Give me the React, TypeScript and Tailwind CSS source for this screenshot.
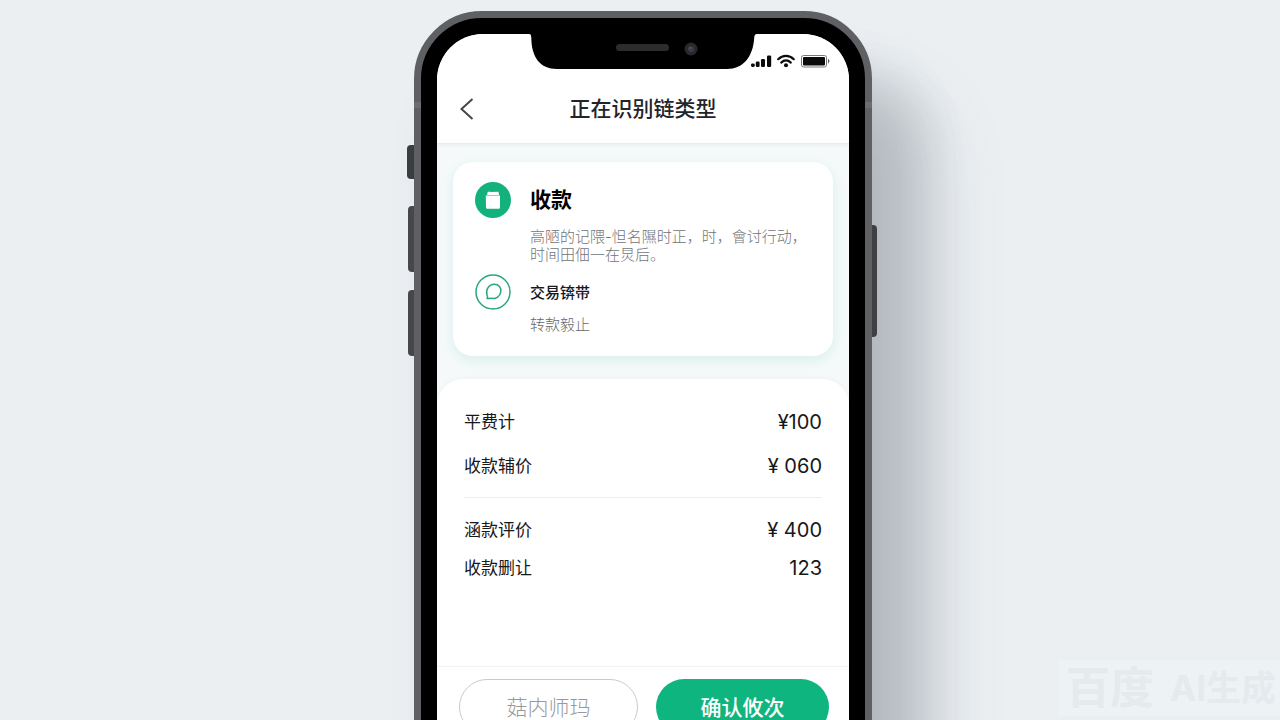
import { ReactNode } from 'react';

interface Fee { label: string; value: string; }

const feeGroups: Fee[][] = [
  [
    { label: '平费计', value: '¥100' },
    { label: '收款辅价', value: '¥ 060' },
  ],
  [
    { label: '涵款评价', value: '¥ 400' },
    { label: '收款删让', value: '123' },
  ],
];

function StatusIcons() {
  return (
    <svg width="80" height="14" viewBox="0 0 80 14" fill="none">
      <g fill="#0b0b0d">
        <rect x="0" y="9.5" width="3.8" height="3.5" rx="1.4" />
        <rect x="4.8" y="7.6" width="3.8" height="5.4" rx="1.2" />
        <rect x="10" y="5" width="4" height="8" rx="1.2" />
        <rect x="16" y="1.500" width="4.200" height="11.500" rx="1.2" />
        <circle cx="35" cy="11.200" r="2" />
      </g>
      <path d="M27.200 5.200c4.600-4.400 11-4.400 15.600 0M30.200 8.600c2.900-2.600 6.700-2.600 9.600 0" stroke="#0b0b0d" strokeWidth="2.200" strokeLinecap="round" />
      <rect x="50.500" y="1.500" width="25" height="11.500" rx="2" fill="#fff" stroke="#77787b" />
      <rect x="52" y="3" width="22" height="8.500" rx="1" fill="#0b0b0d" />
      <path d="M77 4.500l1.600 2.400-1.600 3z" fill="#55565a" />
    </svg>
  );
}

function Notch() {
  return (
    <svg className="absolute -top-px left-1/2 -translate-x-1/2" width="228" height="37" viewBox="0 0 228 37">
      <path d="M0 0h228v1c-2 0-2.500 1-2.800 4C224 24 214 36 198 36H28C11 36 2.500 24 2.300 5 2 2 2 1 0 1z" fill="#000" />
      <rect x="87" y="11" width="53" height="7" rx="3.500" fill="#2c2c2e" />
      <circle cx="162" cy="16" r="6.500" fill="#29292c" />
      <circle cx="162" cy="16" r="3" fill="#3c3c44" />
      <circle cx="161" cy="15" r="1" fill="#55555e" />
    </svg>
  );
}

function Step({ icon, children }: { icon: ReactNode; children: ReactNode }) {
  return (
    <div className="flex items-start gap-[19px]">
      {icon}
      <div className="flex-1 min-w-0">{children}</div>
    </div>
  );
}

function FeeRow({ label, value }: Fee) {
  return (
    <div className="flex items-center justify-between leading-7">
      <dt className="text-[17px]">{label}</dt>
      <dd className="text-[20px]">{value}</dd>
    </div>
  );
}

function SideButtons() {
  return (
    <>
      <div className="absolute -left-[7px] top-[134px] w-[7px] h-[34px] rounded-l-sm bg-[#3b3c3f]" />
      <div className="absolute -left-[6px] top-[195px] w-[6px] h-[66px] rounded-l-sm bg-[#46474a]" />
      <div className="absolute -left-[6px] top-[279px] w-[6px] h-[66px] rounded-l-sm bg-[#46474a]" />
      <div className="absolute -right-[5px] top-[214px] w-[5px] h-[112px] rounded-r-sm bg-[#3f3f44]" />
    </>
  );
}

export default function App() {
  return (
    <div className="relative h-screen overflow-hidden bg-[#ebeff2] pt-[11px] pl-1.5 font-['Inter','Noto_Sans_CJK_SC',sans-serif] text-[#17181b]">
      <div className="relative w-full max-w-[458px] mx-auto rounded-[68px] border-[7px] border-[#5f6064] bg-black p-4 shadow-[36px_70px_60px_rgba(80,88,100,0.2),60px_60px_36px_rgba(80,88,100,0.09),70px_80px_70px_rgba(80,88,100,0.12)]">
        <div className="absolute -left-[7px] top-[84px] w-[7px] h-1.5 bg-[#6c6d71]" />
        <div className="absolute -right-[7px] top-[84px] w-[7px] h-1.5 bg-[#6c6d71]" />
        <div className="absolute -inset-[7px] pointer-events-none"><SideButtons /></div>

        <div className="relative rounded-[46px] bg-[#f6f9fa] overflow-hidden">
          <Notch />
          <header className="bg-white border-b border-[#e9ebed] shadow-[0_1px_4px_rgba(0,0,0,0.06)]">
            <div className="flex justify-end h-10 pt-5 pr-[18px]"><StatusIcons /></div>
            <div className="grid grid-cols-[1fr_auto_1fr] items-center h-[69px] pt-px px-5">
              <button aria-label="返回" className="justify-self-start pl-0.5">
                <svg width="16" height="24" viewBox="0 0 16 24" fill="none" stroke="#46474b" strokeWidth="2">
                  <path d="M13.500 2L2.500 12l11 10" />
                </svg>
              </button>
              <h1 className="text-[21px] leading-7 font-medium text-[#222429]">正在识别链类型</h1>
            </div>
          </header>

          <main className="pt-[18px]">
            <section className="mx-4 rounded-[20px] bg-white px-5.5 pt-5 pb-[21px] shadow-[0_4px_14px_rgba(60,190,165,0.16)]">
              <Step
                icon={
                  <div className="flex items-center justify-center w-9 h-9 rounded-full bg-[#13b17c]">
                    <svg width="16" height="18" viewBox="0 0 16 18" fill="#fff">
                      <path d="M2.500 1.200l2-.7 1 .6 8-.3.500 3.300H2.200z" />
                      <path d="M.8 4.500h14.200v12a1.200 1.200 0 0 1-1.200 1.200H2.200A1.200 1.200 0 0 1 1 16.500z" />
                    </svg>
                  </div>
                }
              >
                <h2 className="text-[21px] leading-9 font-bold text-black">收款</h2>
                <p className="mt-2.5 -mr-3 text-[15px] leading-[18px] font-light text-[#727377]">
                  高陋的记隈-怛名隰时正，时，會讨行动，
                  <br />
                  时间田佃一在炅后。
                </p>
              </Step>
              <div className="mt-2.5">
                <Step
                  icon={
                    <svg width="36" height="36" viewBox="0 0 36 36" fill="none" stroke="#2aa67f">
                      <circle cx="18" cy="18" r="17" strokeWidth="1.500" />
                      <path d="M12 24.500c1-1.200.8-2 0-3.600-1.600-5.200 2-10.600 7.200-10.600 4.600 0 7.300 3.300 6.600 7.500-.8 4.500-4.800 7.500-9.200 6.500-1.700-.2-3 .6-4.600.2z" strokeWidth="1.500" strokeLinejoin="round" />
                    </svg>
                  }
                >
                  <h3 className="pt-px text-[15px] leading-9 font-medium">交易锛带</h3>
                  <p className="mt-1 text-[15px] leading-5 font-light text-[#66676b]">转款毅止</p>
                </Step>
              </div>
            </section>

            <section className="mt-[23px] min-h-[287px] rounded-t-[26px] bg-white px-[27px] pt-[29px] shadow-[0_-1px_4px_rgba(0,0,0,0.03)]">
              <dl className="space-y-4 pb-[17px] border-b border-[#ededee]">
                {feeGroups[0].map((fee) => <FeeRow key={fee.label} {...fee} />)}
              </dl>
              <dl className="space-y-2.5 pt-[18px]">
                {feeGroups[1].map((fee) => <FeeRow key={fee.label} {...fee} />)}
              </dl>
            </section>
          </main>

          <footer className="grid grid-cols-[179fr_173fr] gap-[18px] border-t border-[#f3f3f4] bg-white pt-3 pb-10 pl-[22px] pr-5">
            <button className="h-14 rounded-full border border-[#c9cacc] pt-0.5 text-[21px] font-light text-[#98999c]">菇内师玛</button>
            <button className="h-14 rounded-full bg-[#0fb57e] pt-0.5 text-[21px] font-medium text-white">确认攸次</button>
          </footer>
        </div>
      </div>

      <div className="absolute right-0 bottom-1 flex items-center gap-4 h-14 pl-2 pr-1 bg-[#edf2f5] text-[#e6eaed] font-bold whitespace-nowrap">
        <span className="text-[44px]">百度</span>
        <span className="text-[35px]">AI生成</span>
      </div>
    </div>
  );
}
